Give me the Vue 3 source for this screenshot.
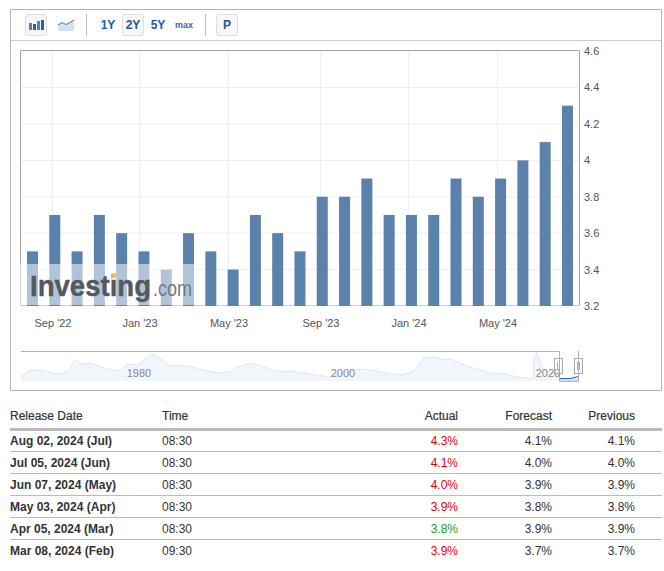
<template>
  <div class="page">
    <div class="chart-box">
      <div class="toolbar">
        <button class="tool active" type="button">
          <svg width="15" height="10" viewBox="0 0 15 10">
            <rect x="0" y="3" width="3" height="7" fill="#5b82ad" />
            <rect x="4" y="4" width="3" height="6" fill="#2f6199" />
            <rect x="8" y="1" width="3" height="9" fill="#5b82ad" />
            <rect x="12" y="0" width="3" height="10" fill="#2f6199" />
          </svg>
        </button>
        <button class="tool plain" type="button">
          <svg width="16" height="12" viewBox="0 0 16 12">
            <path d="M0 6 L4 3.5 L8 5.5 L11 4 L16 1 V12 H0 Z" fill="#d5e1ee" />
            <path d="M0 6 L4 3.5 L8 5.5 L11 4 L16 1" fill="none" stroke="#4a78a8" stroke-width="1" />
          </svg>
        </button>
        <span class="sep"></span>
        <button class="range" type="button">1Y</button>
        <button class="range active" type="button">2Y</button>
        <button class="range" type="button">5Y</button>
        <button class="range small" type="button">max</button>
        <span class="sep second"></span>
        <button class="range active" type="button">P</button>
      </div>

      <svg class="plot" width="650" height="350" viewBox="0 0 650 350">
        <g transform="translate(-11 -41)">
          <g stroke="#efefef" stroke-width="1">
            <line v-for="y in gridY" :key="y" x1="21" x2="579" :y1="y" :y2="y" />
            <line v-for="t in ticks" :key="t.label" :x1="t.grid" :x2="t.grid" y1="51" y2="305" />
          </g>
          <path d="M20.5 306 V50.5 H579.5 V306" fill="none" stroke="#a8a8a8" />
          <line x1="20" x2="580" y1="305.5" y2="305.5" stroke="#c5d2e0" />

          <rect
            v-for="(bar, i) in bars"
            :key="i"
            :x="bar.x"
            :y="bar.y"
            width="11"
            :height="306 - bar.y"
            fill="#5b82ad"
          />

          <!-- logo watermark sits over the first bars -->
          <rect x="20" y="264" width="178" height="41" fill="#fff" fill-opacity="0.52" />
          <text x="30" y="296" class="logo-main" textLength="121" lengthAdjust="spacingAndGlyphs">Investing</text>
          <text x="153" y="296" class="logo-com" textLength="39" lengthAdjust="spacingAndGlyphs">.com</text>
          <path d="M111 274.5 L116.5 273 L116 277 L111 278.5 Z" fill="#f5b94d" />

          <text v-for="t in yLabels" :key="t.label" x="584" :y="t.y" class="axis">{{ t.label }}</text>
          <text v-for="t in ticks" :key="t.label" :x="t.x" y="327" class="axis" text-anchor="middle">{{ t.label }}</text>

          <!-- navigator -->
          <path :d="navArea" fill="#f1f6fc" />
          <path :d="navLine" fill="none" stroke="#dbe7f4" stroke-width="1" />
          <path d="M21 351.5 H559.5 V381.5 H578.5 V351" fill="none" stroke="#b2b2b2" />
          <rect x="560" y="378" width="18" height="3" fill="#cfdff0" />
          <path d="M560 378.5 L570 378.5 L578 376.5" fill="none" stroke="#2f6bb0" stroke-width="1.2" />
          <text x="139" y="377" class="nav-label" text-anchor="middle">1980</text>
          <text x="343" y="377" class="nav-label" text-anchor="middle">2000</text>
          <text x="548" y="377" class="nav-label" text-anchor="middle">2020</text>
          <g v-for="x in [554.5, 574.5]" :key="x">
            <rect :x="x" y="358.5" width="8" height="15" fill="#fff" fill-opacity="0.15" stroke="#a8a8a8" />
            <path :d="`M${x + 3} 362 V370 M${x + 5} 362 V370`" stroke="#a8a8a8" fill="none" />
          </g>
        </g>
      </svg>
    </div>

    <table class="history">
      <thead>
        <tr>
          <th class="col-date">Release Date</th>
          <th class="col-time">Time</th>
          <th class="num col-actual">Actual</th>
          <th class="num col-forecast">Forecast</th>
          <th class="num last col-previous">Previous</th>
        </tr>
      </thead>
      <tbody>
        <tr v-for="row in rows" :key="row.date">
          <td class="date">{{ row.date }}</td>
          <td>{{ row.time }}</td>
          <td class="num" :class="row.tone">{{ row.actual }}</td>
          <td class="num">{{ row.forecast }}</td>
          <td class="num last">{{ row.previous }}</td>
        </tr>
      </tbody>
    </table>
  </div>
</template>

<script setup>
const values = [3.5, 3.7, 3.5, 3.7, 3.6, 3.5, 3.4, 3.6, 3.5, 3.4, 3.7, 3.6, 3.5, 3.8, 3.8, 3.9, 3.7, 3.7, 3.7, 3.9, 3.8, 3.9, 4.0, 4.1, 4.3];

const yOf = (v) => 306 - (v - 3.2) * 182.1;

const bars = values.map((v, i) => ({ x: 27 + i * 22.29, y: yOf(v) }));

const gridY = [87.5, 124, 160.5, 197, 233, 269.5];

const yLabels = ['4.6', '4.4', '4.2', '4', '3.8', '3.6', '3.4', '3.2'].map((label) => ({
  label,
  y: yOf(Number(label)) + 4,
}));

const ticks = [
  { label: "Sep '22", x: 53, grid: 52.5 },
  { label: "Jan '23", x: 140, grid: 139.5 },
  { label: "May '23", x: 229, grid: 228.5 },
  { label: "Sep '23", x: 321, grid: 320.5 },
  { label: "Jan '24", x: 409, grid: 408.5 },
  { label: "May '24", x: 498, grid: 497.5 },
];

const navPoints = [
  [21, 376.5], [30, 370], [43, 370.5], [57, 374], [68, 372], [74, 360], [83, 364], [90, 363],
  [107, 369], [120, 371], [128, 364], [138, 365], [150, 354.5], [156, 355], [168, 365], [187, 366],
  [207, 371], [218, 373], [230, 371.7], [238, 366.7], [252, 363], [275, 371], [290, 371], [310, 374],
  [330, 377], [343, 372], [363, 369], [387, 373], [400, 375], [413, 372], [425, 356.7], [438, 357.7],
  [443, 360], [450, 359], [457, 362], [473, 368], [490, 373], [502, 373], [517, 377], [533, 379],
  [534, 355], [537, 353], [542, 367], [547, 372], [559, 374],
];

const navLine = 'M' + navPoints.map((p) => p.join(' ')).join(' L');
const navArea = navLine + ' V381 H21 Z';

const rows = [
  { date: 'Aug 02, 2024 (Jul)', time: '08:30', actual: '4.3%', forecast: '4.1%', previous: '4.1%', tone: 'up' },
  { date: 'Jul 05, 2024 (Jun)', time: '08:30', actual: '4.1%', forecast: '4.0%', previous: '4.0%', tone: 'up' },
  { date: 'Jun 07, 2024 (May)', time: '08:30', actual: '4.0%', forecast: '3.9%', previous: '3.9%', tone: 'up' },
  { date: 'May 03, 2024 (Apr)', time: '08:30', actual: '3.9%', forecast: '3.8%', previous: '3.8%', tone: 'up' },
  { date: 'Apr 05, 2024 (Mar)', time: '08:30', actual: '3.8%', forecast: '3.9%', previous: '3.9%', tone: 'down' },
  { date: 'Mar 08, 2024 (Feb)', time: '09:30', actual: '3.9%', forecast: '3.7%', previous: '3.7%', tone: 'up' },
];
</script>

<style scoped>
.page {
  width: 664px;
  height: 571px;
  padding: 9px 0 0 10px;
  box-sizing: border-box;
  background: #fff;
  font-family: "Liberation Sans", Arial, sans-serif;
  color: #333;
  overflow: hidden;
}

.chart-box {
  width: 652px;
  height: 382px;
  box-sizing: border-box;
  border: 1px solid #b2b2b2;
}

.toolbar {
  display: flex;
  align-items: center;
  height: 30px;
  padding-left: 14px;
  border-bottom: 1px solid #ccc;
}

.toolbar button {
  display: flex;
  align-items: center;
  justify-content: center;
  box-sizing: border-box;
  padding: 0;
  border: 1px solid transparent;
  border-radius: 3px;
  background: none;
  font-family: inherit;
  cursor: pointer;
}

.tool {
  width: 22px;
  height: 22px;
}

.tool.plain {
  margin-left: 8px;
}

.toolbar .tool.active,
.toolbar .range.active {
  border-color: #ddd;
  background: #f7f7f7;
}

.sep {
  width: 1px;
  height: 22px;
  margin: 0 10px 0 9px;
  background: #bbb;
}

.sep.second {
  margin: 0 10px;
}

.range {
  width: 22px;
  height: 22px;
  margin-right: 3px;
  font-size: 12px;
  font-weight: 700;
  color: #1d5a9c;
}

.range.small {
  width: 22px;
  margin-left: 1px;
  margin-right: 0;
  font-size: 9px;
  color: #4d5f9f;
}

.plot {
  display: block;
}

.logo-main {
  font-family: "Liberation Sans", Arial, sans-serif;
  font-size: 29px;
  font-weight: 700;
  fill: #55585d;
  stroke: #55585d;
  stroke-width: 0.4px;
}

.logo-com {
  font-family: "Liberation Sans", Arial, sans-serif;
  font-size: 22px;
  fill: #75787c;
}

.axis {
  font-family: "Liberation Sans", Arial, sans-serif;
  font-size: 11px;
  fill: #555;
}

.nav-label {
  font-family: "Liberation Sans", Arial, sans-serif;
  font-size: 11px;
  fill: #888;
}

.history {
  width: 652px;
  margin-top: 7px;
  border-collapse: collapse;
  table-layout: fixed;
  font-size: 12px;
}

.history th,
.history td {
  box-sizing: border-box;
}

.history th {
  height: 31px;
  padding: 6px 0 0;
  text-align: left;
  font-weight: 400;
  -webkit-text-stroke: 0.2px #333;
  border-bottom: 3px solid #bbb;
}

.history td {
  height: 22px;
  padding: 1px 0 0;
  border-bottom: 1px solid #bbb;
}

.history tr:last-child td {
  border-bottom: 0;
}

.col-date {
  width: 152px;
}

.col-time {
  width: 130px;
}

.col-actual {
  width: 166px;
}

.col-forecast {
  width: 94px;
}

.col-previous {
  width: 110px;
}

.history .num {
  text-align: right;
}

.history .last {
  padding-right: 27px;
}

.date {
  font-weight: 700;
}

.up {
  color: #e60000;
}

.down {
  color: #1a9a1a;
}
</style>
